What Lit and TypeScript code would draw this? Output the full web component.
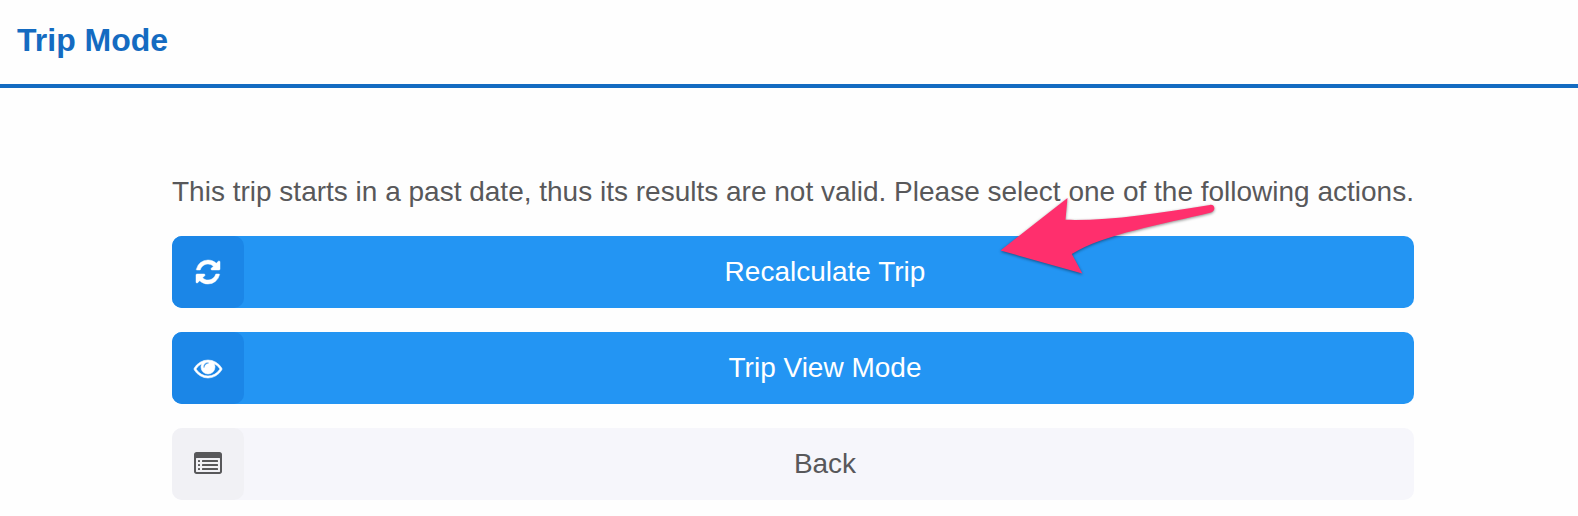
import { LitElement, html, css, svg } from "lit";
import { customElement, property } from "lit/decorators.js";

const refreshIcon = svg`<svg viewBox="-128 -128 1792 1792"><path stroke="currentColor" stroke-width="30" d="M1511 928q0 5-1 7-64 268-268 434.500t-478 166.500q-146 0-282.500-55t-243.500-157l-129 129q-19 19-45 19t-45-19-19-45v-448q0-26 19-45t45-19h448q26 0 45 19t19 45-19 45l-137 137q71 66 161 102t187 36q134 0 250-65t186-179q11-17 53-117 8-23 30-23h192q13 0 22.500 9.500t9.500 22.500zM1536 128v448q0 26-19 45t-45 19h-448q-26 0-45-19t-19-45 19-45l138-138q-148-137-349-137-134 0-250 65t-186 179q-11 17-53 117-8 23-30 23h-199q-13 0-22.500-9.500t-9.500-22.500v-7q65-268 270-434.500t480-166.500q146 0 284 55.500t245 156.500l130-129q19-19 45-19t45 19 19 45z"/></svg>`;

const eyeIcon = svg`<svg viewBox="0 0 1792 1792"><path stroke="currentColor" stroke-width="36" d="M1664 960q-152-236-381-353 61 104 61 225 0 185-131.500 316.500t-316.500 131.500-316.500-131.500-131.500-316.500q0-121 61-225-229 117-381 353 133 205 333.500 326.500t434.500 121.500 434.500-121.500 333.500-326.500zm-720-384q0-20-14-34t-34-14q-125 0-214.500 89.500t-89.500 214.500q0 20 14 34t34 14 34-14 14-34q0-86 61-147t147-61q20 0 34-14t14-34zm848 384q0 34-20 69-140 230-376.500 368.500t-499.500 138.500-499.500-139-376.500-368q-20-35-20-69t20-69q140-229 376.500-368t499.500-139 499.500 139 376.500 368q20 35 20 69z"/></svg>`;

const listIcon = svg`<svg viewBox="0 0 1792 1792"><path d="M1792 288v1088q0 66-47 113t-113 47h-1472q-66 0-113-47t-47-113v-1088q0-66 47-113t113-47h1472q66 0 113 47t47 113zm-128 1088v-832q0-13-9.500-22.500t-22.500-9.500h-1472q-13 0-22.500 9.500t-9.500 22.500v832q0 13 9.500 22.500t22.500 9.500h1472q13 0 22.500-9.500t9.500-22.500z"/>${[640, 896, 1152].map(
  (y) => svg`<rect x="256" y=${y} width="128" height="128" rx="32"/><rect x="512" y=${y} width="1024" height="128" rx="32"/>`
)}</svg>`;

@customElement("action-button")
class ActionButton extends LitElement {
  @property({ attribute: false }) icon: unknown;
  @property() label = "";
  @property({ type: Boolean, reflect: true }) secondary = false;

  static styles = css`
    :host {
      display: block;
    }
    .button {
      display: flex;
      width: 100%;
      height: 72px;
      padding: 0 8px 0 0;
      border: 0;
      border-radius: 10px;
      background: #2395f3;
      color: #fff;
      font: 28px/72px "Liberation Sans", Arial, sans-serif;
      cursor: pointer;
    }
    .icon {
      flex: none;
      display: flex;
      align-items: center;
      justify-content: center;
      width: 72px;
      height: 72px;
      border-radius: 10px;
      background: #1b86e7;
    }
    .icon svg {
      width: 28px;
      height: 28px;
      fill: currentColor;
      overflow: visible;
    }
    .label {
      flex: 1;
      height: 72px;
      line-height: 71px;
      text-align: center;
    }
    :host([secondary]) .button {
      background: #f6f6fb;
      color: #58585a;
    }
    :host([secondary]) .icon {
      background: #f1f1f5;
    }
  `;

  render() {
    return html`<button class="button">
      <span class="icon">${this.icon}</span><span class="label">${this.label}</span>
    </button>`;
  }
}

@customElement("app-root")
class AppRoot extends LitElement {
  static styles = css`
    :host {
      display: block;
      position: relative;
      height: 516px;
      overflow: hidden;
      background: #fefefe;
      font-family: "Liberation Sans", Arial, sans-serif;
    }
    .header {
      box-sizing: border-box;
      height: 88px;
      padding-left: 17px;
      border-bottom: 4px solid #146bc1;
    }
    .title {
      margin: 0;
      color: #146bc1;
      font-size: 32px;
      line-height: 80px;
      font-weight: 700;
    }
    .content {
      width: 1242px;
      margin: 0 164px 0 172px;
      padding-top: 84px;
    }
    .message {
      margin: 0;
      height: 64px;
      color: #58585a;
      font-size: 28px;
      line-height: 39px;
      white-space: nowrap;
    }
    .actions {
      display: grid;
      gap: 24px;
    }
    .arrow {
      position: absolute;
      left: 990px;
      top: 190px;
      width: 240px;
      height: 100px;
      overflow: visible;
      pointer-events: none;
      filter: drop-shadow(0 1px 1.5px rgba(0, 0, 0, 0.45));
    }
  `;

  render() {
    return html`
      <header class="header"><h1 class="title">Trip Mode</h1></header>
      <main class="content">
        <p class="message">This trip starts in a past date, thus its results are not valid. Please select one of the following actions.</p>
        <div class="actions">
          <action-button .icon=${refreshIcon} label="Recalculate Trip"></action-button>
          <action-button .icon=${eyeIcon} label="Trip View Mode"></action-button>
          <action-button secondary .icon=${listIcon} label="Back"></action-button>
        </div>
      </main>
      <svg class="arrow" viewBox="0 0 240 100">
        <path fill="#ff2f6d" d="M10.500 60.500L77.500 8L75.500 29.800C119 31 165 23.500 220 14.900C225.500 14.200 225.800 21.200 221 22.400C174 34 113 44 81.800 64L92.300 83.500Z"/>
      </svg>
    `;
  }
}
